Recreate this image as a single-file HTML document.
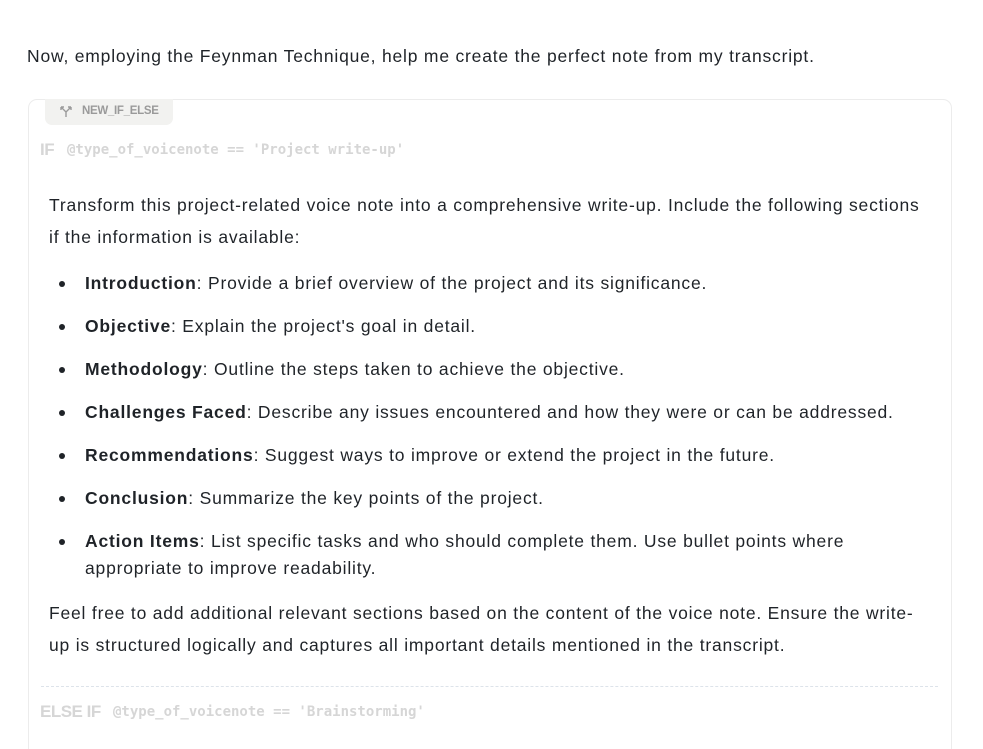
<!DOCTYPE html>
<html><head><meta charset="utf-8"><style>
html,body{margin:0;width:983px;height:749px;overflow:hidden}
body{background:#fff;font-family:"Liberation Sans",sans-serif;color:#1f2328;position:relative;letter-spacing:0.8px}
.t{position:absolute;left:27px;top:46px;font-size:17.5px}
.card{position:absolute;left:28px;top:99px;width:922px;height:650px;border:1px solid #ececec;border-bottom:none;border-radius:9px 9px 0 0}
.badge{position:absolute;left:45px;top:99px;width:128px;height:26px;background:#f2f2f0;border-radius:0 0 7px 7px;font-size:11.5px;font-weight:bold;color:#9a9a9a;letter-spacing:-0.3px}
.badge span{position:absolute;left:37px;top:6px}
.if{position:absolute;left:40px;top:140px;font-size:17px;font-weight:bold;color:#d6d6d6;white-space:pre;letter-spacing:-0.5px}
.if code{position:absolute;top:2px;font-family:"DejaVu Sans Mono",monospace;font-size:14px;font-weight:bold;color:#d6d6d6;letter-spacing:0}
.p{position:absolute;left:49px;width:878px;font-size:17.5px;line-height:32px}
ul{position:absolute;left:49px;top:270px;margin:0;padding:0 0 0 36px;width:820px;font-size:17.5px;line-height:27px;list-style:none}
li{margin-bottom:16px;position:relative}
li:before{content:"";position:absolute;left:-26px;top:11px;width:6px;height:6px;border-radius:50%;background:#1f2328}
.dash{position:absolute;left:41px;top:686px;width:897px;border-top:1px dashed #dde3ea}
</style></head><body>
<div class="t">Now, employing the Feynman Technique, help me create the perfect note from my transcript.</div>
<div class="card"></div>
<div class="badge"><svg style="position:absolute;left:14px;top:6px" width="14" height="13" viewBox="0 0 14 13" fill="none" stroke="#9a9a9a" stroke-width="1.4"><path d="M7 12V7L2 2M2 2h3M2 2v3M7 7l5-5M12 2h-3M12 2v3"/></svg><span>NEW_IF_ELSE</span></div>
<div class="if">IF<code style="left:27px">@type_of_voicenote == 'Project write-up'</code></div>
<div class="p" style="top:189px">Transform this project-related voice note into a comprehensive write-up. Include the following sections if the information is available:</div>
<ul>
<li><b>Introduction</b>: Provide a brief overview of the project and its significance.</li>
<li><b>Objective</b>: Explain the project's goal in detail.</li>
<li><b>Methodology</b>: Outline the steps taken to achieve the objective.</li>
<li><b>Challenges Faced</b>: Describe any issues encountered and how they were or can be addressed.</li>
<li><b>Recommendations</b>: Suggest ways to improve or extend the project in the future.</li>
<li><b>Conclusion</b>: Summarize the key points of the project.</li>
<li><b>Action Items</b>: List specific tasks and who should complete them. Use bullet points where appropriate to improve readability.</li>
</ul>
<div class="p" style="top:597px">Feel free to add additional relevant sections based on the content of the voice note. Ensure the write-up is structured logically and captures all important details mentioned in the transcript.</div>
<div class="dash"></div>
<div class="if" style="top:702px">ELSE IF<code style="left:73px">@type_of_voicenote == 'Brainstorming'</code></div>
</body></html>
